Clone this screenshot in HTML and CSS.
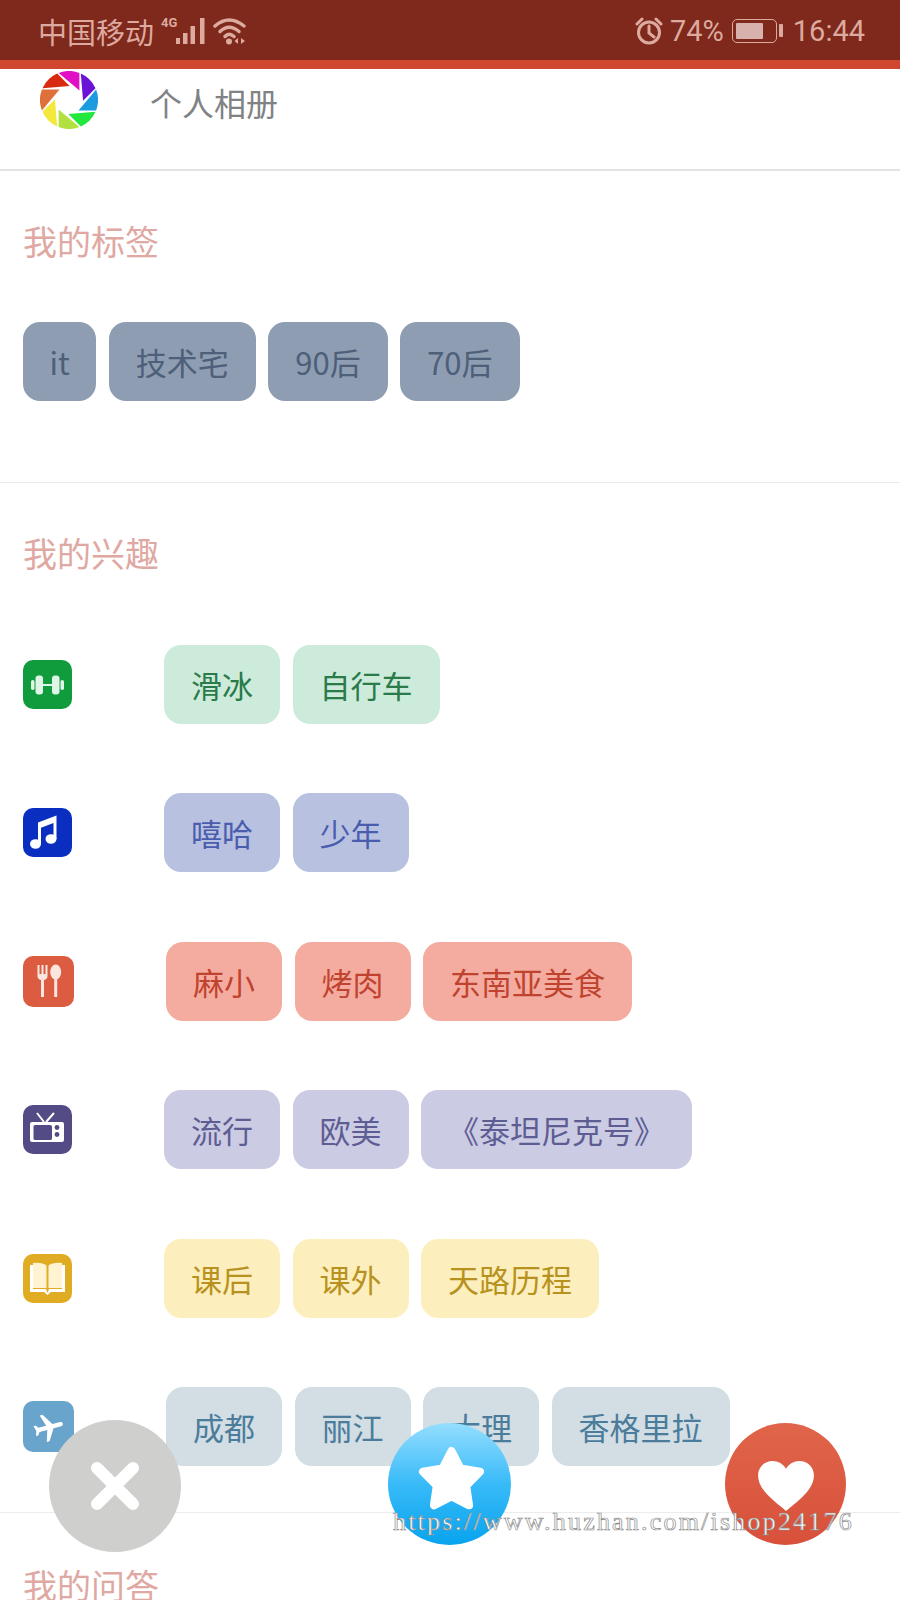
FILE: index.html
```html
<!DOCTYPE html>
<html>
<head>
  <meta charset="utf-8">
  <title>个人相册</title>
  <link rel="stylesheet" href="styles.css">
</head>
<body>

<div class="status">
  <div class="status-side">
    <span class="carrier">中国移动</span>
    <span class="net">4G</span>
    <svg class="signal" width="30" height="28" viewBox="0 0 30 28"><path d="M1 21h4v6H1zM8 16h4.500v11H8zM15.500 9h4.500v18h-4.500zM25 1h4.500v26H25z"/></svg>
    <svg class="wifi" width="34" height="28" viewBox="0 0 34 28"><g fill="none" stroke-width="3.500" stroke-linecap="round"><path d="M2 9Q16-3 31 9"/><path d="M7 14.500Q16 6 26 14.500"/><path d="M12 19.500Q16 15 21 19.500"/></g><circle class="wifi-dot" cx="16" cy="24.500" r="3"/><path class="wifi-dot" d="M25 21v6l-3.500-3zM28 21v6l4-3z"/></svg>
  </div>
  <div class="status-side status-right">
    <svg width="28" height="28" viewBox="0 0 28 28"><g fill="none" stroke-width="3" stroke-linecap="round"><circle cx="14" cy="15.500" r="10.500"/><path d="M14 9v7l5 4M2 7l5-5M26 7l-5-5"/></g></svg>
    <span class="pct">74%</span>
    <span class="battery"><span class="battery-fill"></span></span>
    <span class="battery-nub"></span>
    <span class="clock">16:44</span>
  </div>
</div>

<div class="album">
  <svg class="logo" width="58" height="58" viewBox="-29 -29 58 58">
    <defs><path id="blade" d="M-10.400-27.100A29 29 0 0 1 10.400-27.100L10.400-9.500Z"/></defs>
    <use href="#blade" fill="#e010c4"/>
    <use href="#blade" fill="#6a12d6" transform="rotate(45)"/>
    <use href="#blade" fill="#1d9bdf" transform="rotate(90)"/>
    <use href="#blade" fill="#22e83e" transform="rotate(135)"/>
    <use href="#blade" fill="#b2e03e" transform="rotate(180)"/>
    <use href="#blade" fill="#f5e83c" transform="rotate(225)"/>
    <use href="#blade" fill="#e0703a" transform="rotate(270)"/>
    <use href="#blade" fill="#d82a10" transform="rotate(315)"/>
  </svg>
  <span class="album-name">个人相册</span>
</div>

<div class="section section-tags">
  <div class="title">我的标签</div>
  <div class="tags">
    <span class="tag tag-short grey">it</span>
    <span class="tag grey">技术宅</span>
    <span class="tag grey">90后</span>
    <span class="tag grey">70后</span>
  </div>
</div>

<div class="section section-hobby">
  <div class="title">我的兴趣</div>

  <div class="hobby">
    <svg class="icon ic-sport" viewBox="0 0 49 49"><rect x="8" y="20" width="3.500" height="10" rx="1.700"/><rect x="12.500" y="15.500" width="7.500" height="19" rx="3"/><rect x="20" y="24" width="9" height="2"/><rect x="29" y="15.500" width="7.500" height="19" rx="3"/><rect x="37.500" y="20" width="3.500" height="10" rx="1.700"/></svg>
    <div class="tags">
      <span class="tag green">滑冰</span>
      <span class="tag green">自行车</span>
    </div>
  </div>

  <div class="hobby">
    <svg class="icon ic-music" viewBox="0 0 49 49"><ellipse cx="12.500" cy="36" rx="5.500" ry="4.800"/><ellipse cx="28" cy="31" rx="5.500" ry="4.800"/><path d="M15 36V14.500L33.500 7.500V31h-3V15L18 19.800V36z"/></svg>
    <div class="tags">
      <span class="tag blue">嘻哈</span>
      <span class="tag blue">少年</span>
    </div>
  </div>

  <div class="hobby">
    <svg class="icon icon-wide ic-food" viewBox="0 0 51 51"><path d="M14.500 9h2v9h2V9h2v9h2V9h2v11q0 3-3.500 4v17h-3V24q-3.500-1-3.500-4z"/><ellipse cx="32.700" cy="16" rx="5.500" ry="7.500"/><path d="M31.200 20h3v21h-3z"/></svg>
    <div class="tags">
      <span class="tag red">麻小</span>
      <span class="tag red">烤肉</span>
      <span class="tag red">东南亚美食</span>
    </div>
  </div>

  <div class="hobby">
    <svg class="icon ic-tv" viewBox="0 0 49 49"><path d="M14 8l7 9M31 8l-8 9" fill="none" stroke="#fff" stroke-width="2"/><path fill-rule="evenodd" d="M9 17h30q2 0 2 2v16q0 2-2 2H9q-2 0-2-2V19q0-2 2-2zM12 20q-1.500 0-1.500 1.500v12q0 1.500 1.500 1.500h15q2 0 2-1.500v-12q0-1.500-2-1.500z"/><circle cx="34" cy="22.500" r="2.400" fill="#534b86"/><circle cx="34" cy="29.500" r="2.400" fill="#534b86"/></svg>
    <div class="tags">
      <span class="tag purple">流行</span>
      <span class="tag purple">欧美</span>
      <span class="tag purple">《泰坦尼克号》</span>
    </div>
  </div>

  <div class="hobby">
    <svg class="icon ic-book" viewBox="0 0 49 49"><path fill="#fff" d="M7 11h3v24h13l1.500 4 1.500-4h13V11h3v27H28l-3.500 3-3.500-3H7z"/><path fill="#fff3d2" d="M10 9q9-1 13.500 2.500V34H10zM39 9q-9-1-13.500 2.500V34H39z"/></svg>
    <div class="tags">
      <span class="tag yellow">课后</span>
      <span class="tag yellow">课外</span>
      <span class="tag yellow">天路历程</span>
    </div>
  </div>

  <div class="hobby">
    <svg class="icon icon-wide ic-plane" viewBox="0 0 51 51"><path transform="translate(26 27) rotate(75) scale(1.450) translate(-12 -12)" d="M21 16v-2l-8-5V3.500c0-.83-.67-1.500-1.500-1.500S10 2.670 10 3.500V9l-8 5v2l8-2.500V19l-2 1.500V22l3.500-1 3.500 1v-1.500L13 19v-5.500l8 2.500z"/></svg>
    <div class="tags">
      <span class="tag slate">成都</span>
      <span class="tag slate">丽江</span>
      <span class="tag slate">大理</span>
      <span class="tag slate">香格里拉</span>
    </div>
  </div>
</div>

<div class="section section-last">
  <div class="title">我的问答</div>
</div>

<div class="fab fab-no">
  <svg width="64" height="64" viewBox="0 0 64 64"><path d="M14 14l36 36M50 14L14 50" fill="none" stroke="#fff" stroke-width="12" stroke-linecap="round"/></svg>
</div>
<div class="fab fab-star">
  <svg width="84" height="84" viewBox="-42 -42 84 84"><path transform="translate(1.500 -3)" d="M0-30L9.100-12.500 28.500-9.300 14.700 4.800 17.600 24.300 0 15.500-17.600 24.300-14.700 4.800-28.500-9.300-9.100-12.500Z" fill="#fff" stroke="#fff" stroke-width="8" stroke-linejoin="round"/></svg>
</div>
<div class="fab fab-heart">
  <svg class="heart" width="58" height="52" viewBox="0 0 60 54"><path d="M30 53C20 44 1 32 1 16 1 7 8 1 16 1c6 0 11 3 14 8 3-5 8-8 14-8 8 0 15 6 15 15 0 16-19 28-29 37z" fill="#fff"/></svg>
</div>

<div class="watermark">https://www.huzhan.com/ishop24176</div>

</body>
</html>
```

FILE: styles.css
```css
html, body {
  margin: 0;
  height: 1600px;
  overflow: hidden;
}

body {
  position: relative;
  background: #fff;
  font-family: "Noto Sans CJK SC", "Noto Sans", sans-serif;
}

.status {
  display: flex;
  justify-content: space-between;
  align-items: center;
  box-sizing: border-box;
  height: 69px;
  padding: 1px 35px 0 38px;
  background: #7f281c;
  border-bottom: 9px solid #d0462f;
  color: #dcaa9f;
}

.status-side {
  display: flex;
  align-items: center;
}

.status svg {
  fill: #dcaa9f;
  stroke: #dcaa9f;
  stroke-width: 0;
}

.carrier {
  font-size: 29px;
  line-height: 60px;
}

.net {
  align-self: flex-start;
  margin: 15px 0 0 7px;
  font: bold 13px/14px "Roboto", sans-serif;
}

.signal {
  margin: 0 0 0 -2px;
}

.wifi {
  margin: 0 0 0 8px;
}

.status svg .wifi-dot {
  stroke-width: 0;
}

.status-right {
  font-family: "Roboto", sans-serif;
  font-size: 29px;
}

.pct {
  margin-left: 7px;
}

.battery {
  display: flex;
  box-sizing: border-box;
  width: 45px;
  height: 24px;
  margin-left: 8px;
  padding: 3px;
  border: 1.5px solid #dcaa9f;
  border-radius: 5px;
}

.battery-fill {
  width: 74%;
  background: #d8b0ac;
  border-radius: 1px;
}

.battery-nub {
  width: 4px;
  height: 13px;
  margin-left: 2px;
  background: #dcaa9f;
  border-radius: 1px;
}

.clock {
  margin-left: 10px;
}

.album {
  display: flex;
  box-sizing: border-box;
  height: 102px;
  padding: 2px 0 0 40px;
  border-bottom: 2px solid #e2e2e2;
}

.logo {
  flex: none;
}

.album-name {
  margin: 8px 0 0 52px;
  color: #808284;
  font-size: 32px;
  line-height: 46px;
}

.section {
  padding: 51px 0 0 23px;
}

.section-tags {
  box-sizing: border-box;
  height: 312px;
  padding-top: 50px;
  border-bottom: 1px solid #e9e9e9;
}

.section-hobby {
  box-sizing: border-box;
  height: 1030px;
  padding-top: 50px;
  border-bottom: 1px solid #ececec;
}

.section-last {
  padding-top: 52px;
}

.title {
  margin-bottom: 61px;
  color: #e0a8a2;
  font-size: 34px;
  line-height: 40px;
}

.section-hobby .title {
  margin-bottom: 72px;
}

.tags {
  display: flex;
  gap: 12.500px;
}

.tag {
  height: 79px;
  padding: 0 27px;
  border-radius: 17px;
  font-size: 31px;
  line-height: 79px;
  white-space: nowrap;
}

.tag-short {
  padding: 0 26.500px;
}

.grey { background: #8e9db2; color: #4d5f79; }
.green { background: #cdebdb; color: #2a7a4a; }
.blue { background: #b8c2e0; color: #4a5cae; }
.red { background: #f5aca0; color: #bf432f; }
.purple { background: #cbcbe3; color: #5d5d93; }
.yellow { background: #fdefbd; color: #b8921f; }
.slate { background: #d2dee3; color: #4b7c9c; }

.hobby {
  display: flex;
  align-items: center;
  height: 79px;
  margin-bottom: 69.400px;
}

.icon {
  flex: none;
  width: 49px;
  height: 49px;
  margin-right: 92px;
  border-radius: 10px;
  fill: #fff;
}

.icon-wide {
  width: 51px;
  height: 51px;
}

.ic-sport { background: #109c3c; fill: #dff5e5; }
.ic-music { background: #0a2fc0; }
.ic-food { background: #dc5c42; fill: #fbe6df; }
.ic-tv { background: #534b86; }
.ic-book { background: #e0ac24; }
.ic-plane { background: #68a4cc; }

.fab {
  position: absolute;
  display: flex;
  align-items: center;
  justify-content: center;
  border-radius: 50%;
}

.fab-no {
  left: 49px;
  top: 1420px;
  width: 132px;
  height: 132px;
  background: #cfcfcd;
}

.fab-star {
  left: 388px;
  top: 1423px;
  width: 123px;
  height: 122px;
  background: linear-gradient(#95deff, #38baf8 50%, #08a4ee);
}

.fab-heart {
  left: 725px;
  top: 1423px;
  width: 121px;
  height: 122px;
  background: linear-gradient(#e0654a, #d8503a);
}

.heart {
  margin-top: 4px;
}

.watermark {
  position: absolute;
  left: 393px;
  top: 1507px;
  color: #fff;
  font-family: "Liberation Serif", serif;
  font-size: 26px;
  letter-spacing: 2.200px;
  line-height: 30px;
  -webkit-text-stroke: 0.7px #8c8c8c;
  white-space: nowrap;
}
```
